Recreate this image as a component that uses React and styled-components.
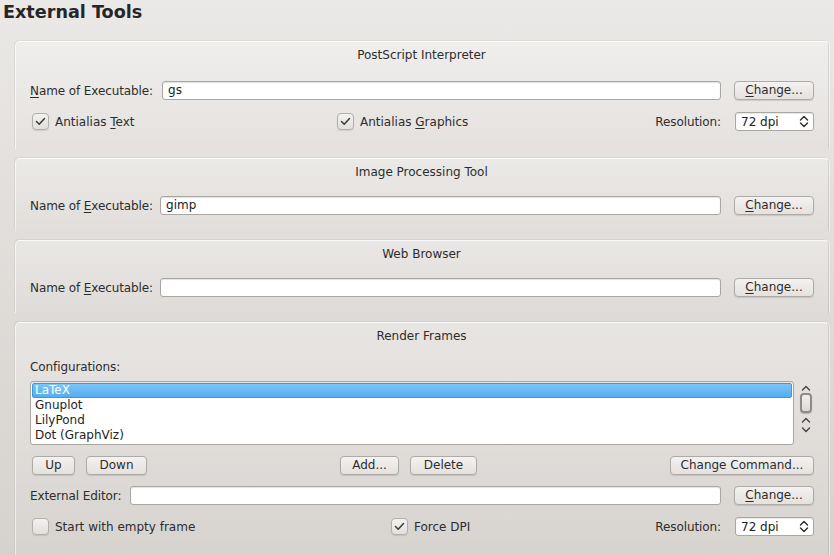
import React from "react"
import styled, { createGlobalStyle } from "styled-components"

const GlobalStyle = createGlobalStyle`
  html, body {
    margin: 0;
    padding: 0;
  }
  body {
    font-family: "DejaVu Sans", "Liberation Sans", sans-serif;
    font-size: 12px;
    color: #2d2d2d;
  }
`

const Page = styled.div`
  width: 834px;
  height: 555px;
  overflow: hidden;
  box-sizing: border-box;
  background: linear-gradient(180deg, #ebe9e7 0%, #e2dfdc 35%, #d6d2ce 100%);
`

const Title = styled.h1`
  margin: 0;
  padding: 1px 0 0 3px;
  height: 41px;
  box-sizing: border-box;
  font-size: 17.6px;
  font-weight: bold;
  line-height: 22px;
  color: #262626;
`

const Groups = styled.div`
  display: flex;
  flex-direction: column;
  gap: 9px;
  padding: 0 5px 0 15px;
`

const Group = styled.section`
  display: flex;
  flex-direction: column;
  padding: 6px 14px ${(p) => p.$bottom}px 13px;
  border-radius: 5px 5px 0 0;
  border-top: 1px solid rgba(255, 255, 255, 0.85);
  border-left: 1px solid rgba(255, 255, 255, 0.6);
  border-right: 1px solid rgba(0, 0, 0, 0.1);
  box-shadow: 1px 0 0 rgba(255, 255, 255, 0.5), -1px -1px 0 rgba(0, 0, 0, 0.05);
  background: linear-gradient(180deg, rgba(255, 255, 255, 0.3), rgba(255, 255, 255, 0.02));
`

const GroupTitle = styled.div`
  text-align: center;
  line-height: 14px;
  margin-bottom: ${(p) => p.$gap}px;
`

const Row = styled.div`
  display: flex;
  align-items: center;
  margin-top: ${(p) => p.$top || 0}px;
`

const Label = styled.span`
  white-space: nowrap;
  margin-right: ${(p) => p.$space}px;
  padding-left: 1px;
  letter-spacing: -0.1px;
`

const Mn = styled.span`
  text-decoration: underline;
  text-underline-offset: 2px;
`

const TextInput = styled.div`
  flex: 1;
  height: 19px;
  box-sizing: border-box;
  border: 1px solid #aaa6a2;
  border-radius: 3px;
  background: #fff;
  box-shadow: inset 0 1px 1px rgba(0, 0, 0, 0.12);
  padding-left: 5px;
  line-height: 17px;
  color: #222;
`

const Button = styled.div`
  width: ${(p) => p.$w}px;
  height: 19px;
  box-sizing: border-box;
  margin-left: ${(p) => p.$ml || 0}px;
  border: 1px solid #aeaaa6;
  border-radius: 4px;
  background: linear-gradient(180deg, #f4f3f2 0%, #e4e1de 100%);
  box-shadow: 0 1px 1px rgba(0, 0, 0, 0.12);
  text-align: center;
  line-height: 17px;
  color: #2d2d2d;
  white-space: nowrap;
`

const Spacer = styled.div`
  flex: 1;
`

const CheckGrid = styled.div`
  display: grid;
  grid-template-columns: ${(p) => p.$first}px 1fr auto auto;
  align-items: center;
  margin-top: ${(p) => p.$top}px;
`

const CheckItem = styled.label`
  display: flex;
  align-items: center;
  gap: 6px;
  padding-left: 3px;
`

const Box = styled.span`
  width: 17px;
  height: 17px;
  box-sizing: border-box;
  display: flex;
  align-items: center;
  justify-content: center;
  border: 1px solid #b3afab;
  border-radius: 4px;
  background: linear-gradient(180deg, #f3f2f1, #e2dfdc);
  box-shadow: 0 1px 1px rgba(0, 0, 0, 0.1);
`

const Combo = styled.div`
  width: 79px;
  height: 19px;
  box-sizing: border-box;
  margin-left: 14px;
  display: flex;
  align-items: center;
  justify-content: space-between;
  padding: 0 4px 0 5px;
  border: 1px solid #aaa6a2;
  border-radius: 3px;
  background: #fff;
  box-shadow: inset 0 1px 1px rgba(0, 0, 0, 0.1);
  color: #222;
`

const SubLabel = styled.div`
  line-height: 14px;
  margin-bottom: 7px;
  padding-left: 1px;
  letter-spacing: -0.1px;
`

const ListRow = styled.div`
  display: flex;
  gap: 4px;
`

const List = styled.div`
  flex: 1;
  height: 64px;
  box-sizing: border-box;
  margin-left: 1px;
  padding: 1px 1px;
  border: 1px solid #a9a5a1;
  border-radius: 3px;
  background: #fff;
  box-shadow: inset 0 1px 1px rgba(0, 0, 0, 0.1);
`

const Item = styled.div`
  height: 15px;
  line-height: 15px;
  padding-left: 3px;
  box-sizing: border-box;
  color: ${(p) => (p.$sel ? "#fff" : "#1e1e1e")};
  border-radius: 2px;
  ${(p) =>
    p.$sel &&
    `
    background: linear-gradient(180deg, #7cc4f6 0%, #55aef0 100%);
    border: 1px solid #3b96dc;
    line-height: 13px;
    padding-left: 2px;
  `}
`

const Scroll = styled.div`
  width: 16px;
  height: 64px;
  display: flex;
  flex-direction: column;
  align-items: center;
`

const ScrollGap = styled.div`
  height: ${(p) => p.$h}px;
`

const Thumb = styled.div`
  width: 12px;
  height: 20px;
  margin: 2px 0 4px;
  box-sizing: border-box;
  border: 2px solid #8f8b87;
  border-radius: 4px;
  background: linear-gradient(180deg, #f1f0ef, #dcd9d6);
  box-shadow: 0 1px 1px rgba(0, 0, 0, 0.2);
`

const Check = () => (
  <svg width="11" height="9" viewBox="0 0 11 9">
    <path d="M1.5 4.5 L4.2 7.2 L9.5 1.5" fill="none" stroke="#3a3a3a" strokeWidth="1.5" strokeLinecap="round" strokeLinejoin="round" />
  </svg>
)

const Chevron = ({ up }) => (
  <svg width="10" height="6" viewBox="0 0 10 6">
    <path d={up ? "M1.5 5 L5 1.5 L8.5 5" : "M1.5 1 L5 4.5 L8.5 1"} fill="none" stroke="#444" strokeWidth="1.4" strokeLinecap="round" strokeLinejoin="round" />
  </svg>
)

const UpDown = () => (
  <svg width="10" height="13" viewBox="0 0 10 13">
    <path d="M1.5 5 L5 1.5 L8.5 5 M1.5 8 L5 11.5 L8.5 8" fill="none" stroke="#333" strokeWidth="1.5" strokeLinecap="round" strokeLinejoin="round" />
  </svg>
)

const CheckBox = ({ checked, children }) => (
  <CheckItem>
    <Box>{checked && <Check />}</Box>
    <span>{children}</span>
  </CheckItem>
)

const Resolution = () => (
  <>
    <Label $space={0}>Resolution:</Label>
    <Combo>
      <span>72 dpi</span>
      <UpDown />
    </Combo>
  </>
)

const ChangeButton = ({ ml }) => (
  <Button $w={80} $ml={ml}>
    <Mn>C</Mn>hange...
  </Button>
)

const ExecutableRow = ({ value, mnemonic, space }) => (
  <Row>
    <Label $space={space}>
      {mnemonic === "N" ? (
        <>
          <Mn>N</Mn>ame of Executable:
        </>
      ) : (
        <>
          Name of <Mn>E</Mn>xecutable:
        </>
      )}
    </Label>
    <TextInput>{value}</TextInput>
    <ChangeButton ml={13} />
  </Row>
)

export default function App() {
  return (
    <Page>
      <GlobalStyle />
      <Title>External Tools</Title>
      <Groups>
        <Group $bottom={18}>
          <GroupTitle $gap={19}>PostScript Interpreter</GroupTitle>
          <ExecutableRow value="gs" mnemonic="N" space={9} />
          <CheckGrid $first={305} $top={12}>
            <CheckBox checked>
              Antialias <Mn>T</Mn>ext
            </CheckBox>
            <CheckBox checked>
              Antialias <Mn>G</Mn>raphics
            </CheckBox>
            <Resolution />
          </CheckGrid>
        </Group>

        <Group $bottom={16}>
          <GroupTitle $gap={17}>Image Processing Tool</GroupTitle>
          <ExecutableRow value="gimp" mnemonic="E" space={7} />
        </Group>

        <Group $bottom={16}>
          <GroupTitle $gap={17}>Web Browser</GroupTitle>
          <ExecutableRow value="" mnemonic="E" space={7} />
        </Group>

        <Group $bottom={30}>
          <GroupTitle $gap={17}>Render Frames</GroupTitle>
          <SubLabel>Configurations:</SubLabel>
          <ListRow>
            <List>
              <Item $sel>LaTeX</Item>
              <Item>Gnuplot</Item>
              <Item>LilyPond</Item>
              <Item>Dot (GraphViz)</Item>
            </List>
            <Scroll>
              <ScrollGap $h={4} />
              <Chevron up />
              <Thumb />
              <Chevron up />
              <ScrollGap $h={4} />
              <Chevron />
            </Scroll>
          </ListRow>
          <Row $top={11}>
            <Button $w={43} $ml={3}>Up</Button>
            <Button $w={61} $ml={11}>Down</Button>
            <Spacer />
            <Button $w={59}>Add...</Button>
            <Button $w={67} $ml={11}>Delete</Button>
            <Spacer />
            <Button $w={144}>Change Command...</Button>
          </Row>
          <Row $top={11}>
            <Label $space={9}>External Editor:</Label>
            <TextInput />
            <ChangeButton ml={13} />
          </Row>
          <CheckGrid $first={359} $top={12}>
            <CheckBox>Start with empty frame</CheckBox>
            <CheckBox checked>Force DPI</CheckBox>
            <Resolution />
          </CheckGrid>
        </Group>
      </Groups>
    </Page>
  )
}
